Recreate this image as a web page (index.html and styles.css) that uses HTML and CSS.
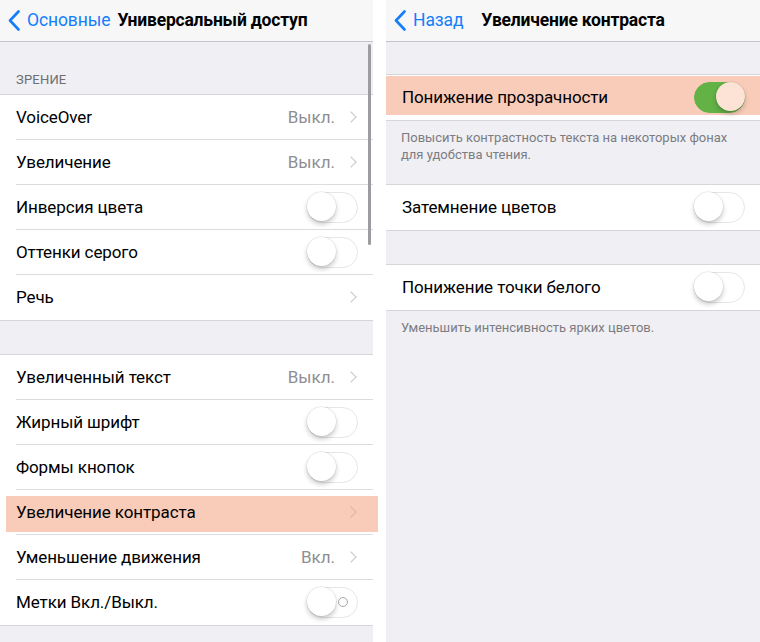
FILE: index.html
```html
<!DOCTYPE html>
<html lang="ru">
<head>
<meta charset="utf-8">
<link rel="stylesheet" href="styles.css">
</head>
<body>
<div class="screens">
  <section class="panel">
    <header class="nav">
      <a class="back"><svg class="back-chev" width="12" height="21" viewBox="0 0 12 21"><path d="M10.5 1.5 L2 10.5 L10.5 19.5" fill="none" stroke="#147efb" stroke-width="2.6" stroke-linecap="round" stroke-linejoin="round"/></svg><span>Основные</span></a>
      <h1 class="title title-left">Универсальный доступ</h1>
    </header>
    <div class="content">
      <div class="scrollbar"></div>
      <div class="sec-head">ЗРЕНИЕ</div>
      <ul class="group">
        <li class="row"><span class="label">VoiceOver</span><span class="value">Выкл.</span><span class="chev"></span></li>
        <li class="row"><span class="label">Увеличение</span><span class="value">Выкл.</span><span class="chev"></span></li>
        <li class="row"><span class="label">Инверсия цвета</span><span class="switch"><span class="knob"></span></span></li>
        <li class="row"><span class="label">Оттенки серого</span><span class="switch"><span class="knob"></span></span></li>
        <li class="row"><span class="label">Речь</span><span class="chev"></span></li>
      </ul>
      <div class="gap"></div>
      <ul class="group">
        <li class="row"><span class="label">Увеличенный текст</span><span class="value">Выкл.</span><span class="chev"></span></li>
        <li class="row"><span class="label">Жирный шрифт</span><span class="switch"><span class="knob"></span></span></li>
        <li class="row"><span class="label">Формы кнопок</span><span class="switch"><span class="knob"></span></span></li>
        <li class="row hl-left"><span class="label">Увеличение контраста</span><span class="chev"></span></li>
        <li class="row"><span class="label">Уменьшение движения</span><span class="value">Вкл.</span><span class="chev"></span></li>
        <li class="row"><span class="label">Метки Вкл./Выкл.</span><span class="switch labels"><span class="knob"></span><span class="ring"></span></span></li>
      </ul>
    </div>
  </section>
  <section class="panel">
    <header class="nav nav-center">
      <a class="back back-abs"><svg class="back-chev" width="12" height="21" viewBox="0 0 12 21"><path d="M10.5 1.5 L2 10.5 L10.5 19.5" fill="none" stroke="#147efb" stroke-width="2.6" stroke-linecap="round" stroke-linejoin="round"/></svg><span>Назад</span></a>
      <h1 class="title">Увеличение контраста</h1>
    </header>
    <div class="content">
      <div class="gap-top"></div>
      <ul class="group">
        <li class="row hl-right"><span class="label">Понижение прозрачности</span><span class="switch on"><span class="knob"></span></span></li>
      </ul>
      <p class="foot">Повысить контрастность текста на некоторых фонах для удобства чтения.</p>
      <ul class="group">
        <li class="row"><span class="label">Затемнение цветов</span><span class="switch"><span class="knob"></span></span></li>
      </ul>
      <div class="gap"></div>
      <ul class="group">
        <li class="row"><span class="label">Понижение точки белого</span><span class="switch"><span class="knob"></span></span></li>
      </ul>
      <p class="foot">Уменьшить интенсивность ярких цветов.</p>
    </div>
  </section>
</div>
</body>
</html>
```

FILE: styles.css
```css
* { box-sizing: border-box; }
html, body { margin: 0; padding: 0; background: #ffffff; }
body {
  font-family: Roboto, "Noto Sans", "Liberation Sans", sans-serif;
  color: #000;
  width: 760px;
  height: 642px;
  overflow: hidden;
}
.screens {
  display: flex;
  gap: 13px;
  height: 642px;
}
.panel {
  flex: 0 0 373px;
  display: flex;
  flex-direction: column;
  background: #efeff4;
  overflow: visible;
  position: relative;
}
.panel:last-child { flex: 0 0 374px; }
.nav {
  height: 42px;
  flex: 0 0 42px;
  background: #f7f7f7;
  border-bottom: 1px solid #c4c4c8;
  display: flex;
  align-items: center;
  padding-left: 8px;
  padding-bottom: 2px;
  gap: 7px;
  position: relative;
}
.nav-center { justify-content: center; padding-left: 0; }
.back {
  display: flex;
  align-items: center;
  gap: 7px;
  color: #147efb;
  font-size: 17.5px;
  letter-spacing: -0.1px;
}
.back-chev { display: block; margin-top: 1px; }
.back-abs { position: absolute; left: 8px; top: 0; bottom: 2px; }
.title {
  margin: 0;
  font-size: 17.5px;
  font-weight: 700;
  letter-spacing: -0.2px;
}
.content {
  flex: 1;
  position: relative;
  display: flex;
  flex-direction: column;
}
.scrollbar {
  position: absolute;
  right: 2px;
  top: 2px;
  width: 3px;
  height: 201px;
  border-radius: 2px;
  background: #9d9da1;
  z-index: 5;
}
.sec-head {
  height: 52px;
  padding: 0 0 7px 16px;
  display: flex;
  align-items: flex-end;
  font-size: 13px;
  color: #6d6d72;
  letter-spacing: 0.2px;
}
.gap { height: 33px; flex: 0 0 33px; }
.gap-top { height: 32px; flex: 0 0 32px; }
.group {
  list-style: none;
  margin: 0;
  padding: 0;
  background: #fff;
  border-top: 1px solid #d6d6da;
  border-bottom: 1px solid #d6d6da;
}
.row {
  height: 45px;
  display: flex;
  align-items: center;
  padding: 0 15px 0 16px;
  position: relative;
}
.row + .row::before {
  content: "";
  position: absolute;
  left: 16px;
  right: 0;
  top: -1px;
  height: 1px;
  background: #dcdce0;
}
.label {
  flex: 1;
  font-size: 17px;
  letter-spacing: -0.1px;
  position: relative;
  z-index: 2;
  margin-top: -2px;
}
.value {
  font-size: 17px;
  color: #8e8e93;
  margin-right: 15px;
  position: relative;
  z-index: 2;
  margin-top: -2px;
}
.chev {
  width: 7px;
  height: 12px;
  position: relative;
  z-index: 2;
  margin-right: 1px;
}
.chev::after {
  content: "";
  position: absolute;
  left: -3px;
  top: 1px;
  width: 7px;
  height: 7px;
  border-right: 1.6px solid #c7c7cc;
  border-top: 1.6px solid #c7c7cc;
  transform: rotate(45deg);
}
.switch {
  width: 51px;
  height: 31px;
  border-radius: 16px;
  border: 1.5px solid #e6e6e9;
  background: #fff;
  position: relative;
  z-index: 2;
}
.switch .knob {
  position: absolute;
  left: -1px;
  top: -1px;
  width: 29px;
  height: 29px;
  border-radius: 50%;
  background: #fff;
  box-shadow: 0 3px 5px rgba(0,0,0,0.22), 0 0 0 0.5px rgba(0,0,0,0.1);
}
.switch.on {
  background: #62b246;
  border-color: #62b246;
}
.switch.on .knob {
  left: auto;
  right: -1px;
  background: #fde3d6;
}
.switch .ring {
  position: absolute;
  right: 9px;
  top: 9px;
  width: 10px;
  height: 10px;
  border-radius: 50%;
  border: 1.3px solid #a8a8ac;
}
.hl-left::after {
  content: "";
  position: absolute;
  left: 6px;
  right: -5px;
  top: 6px;
  bottom: 3px;
  background: #f9ccb9;
  z-index: 1;
}
.hl-left .chev::after { border-color: #d8b3a4; }
.hl-right::after {
  content: "";
  position: absolute;
  left: 0;
  right: 0;
  top: 1px;
  bottom: 5px;
  background: #f9ccb9;
  z-index: 1;
}
.foot {
  margin: 0;
  padding: 8px 10px 0 15px;
  height: 63px;
  font-size: 13px;
  line-height: 17px;
  color: #7c7c81;
}
```
